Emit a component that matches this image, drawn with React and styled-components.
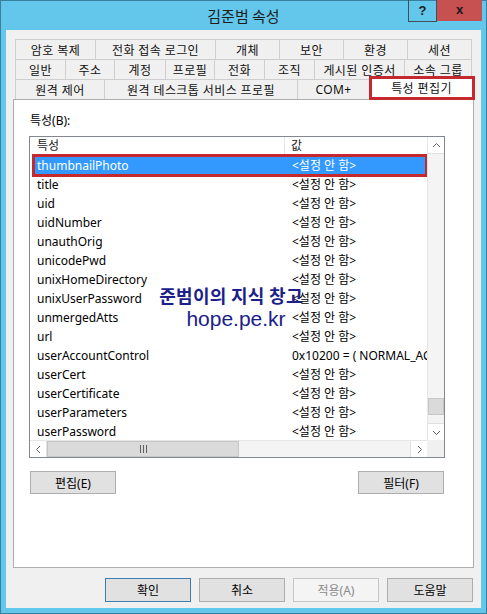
import React from 'react';
import styled, { createGlobalStyle, css } from 'styled-components';

const GlobalStyle = createGlobalStyle`
  html, body { margin: 0; padding: 0; background: #fff; }
  body {
    font-family: "Noto Sans", "Noto Sans CJK KR", sans-serif;
    font-size: 12px;
    color: #000;
  }
  * { box-sizing: border-box; }
`;

const tabRows = [
  [['암호 복제', 81], ['전화 접속 로그인', 120], ['개체', 64], ['보안', 64], ['환경', 64], ['세션', 64]],
  [['일반', 51], ['주소', 49], ['계정', 51], ['프로필', 49], ['전화', 50], ['조직', 50], ['게시된 인증서', 90], ['소속 그룹', 67]],
  [['원격 제어', 90], ['원격 데스크톱 서비스 프로필', 193], ['COM+', 72], ['특성 편집기', 102, true]],
];

const NOT_SET = '<설정 안 함>';

const attributes = [
  ['thumbnailPhoto', NOT_SET, true],
  ['title', NOT_SET],
  ['uid', NOT_SET],
  ['uidNumber', NOT_SET],
  ['unauthOrig', NOT_SET],
  ['unicodePwd', NOT_SET],
  ['unixHomeDirectory', NOT_SET],
  ['unixUserPassword', NOT_SET],
  ['unmergedAtts', NOT_SET],
  ['url', NOT_SET],
  ['userAccountControl', '0x10200 = ( NORMAL_ACCOUNT | DONT_EXPIRE_PASSWORD )'],
  ['userCert', NOT_SET],
  ['userCertificate', NOT_SET],
  ['userParameters', NOT_SET],
  ['userPassword', NOT_SET],
  ['userPrincipalName', 'hope@hope.pe.kr'],
];

const Window = styled.div`
  position: relative;
  width: 487px;
  height: 614px;
  background: #63c6eb;
  border: 1px solid #3b7f9e;
  padding: 0 5px 5px;
  display: flex;
  flex-direction: column;
`;

const TitleBar = styled.div`
  height: 29px;
  flex: none;
  display: grid;
  grid-template-columns: 1fr auto 1fr;
  align-items: center;
`;

const Title = styled.div`
  grid-column: 2;
  font-family: "Noto Sans CJK KR", sans-serif;
  font-size: 15px;
  color: #1e1e1e;
  margin-top: -1px;
`;

const Controls = styled.div`
  grid-column: 3;
  justify-self: end;
  align-self: start;
  display: flex;
  margin: -1px -1px 0 0;
`;

const HelpButton = styled.div`
  width: 29px;
  height: 22px;
  border: 1px solid #3d4f5a;
  border-top: 0;
  display: flex;
  align-items: center;
  justify-content: center;
  font-family: "Liberation Sans", sans-serif;
  font-weight: 700;
  font-size: 13px;
  color: #1a1a1a;
`;

const CloseButton = styled.div`
  width: 45px;
  height: 21px;
  background: #c75050;
  display: flex;
  align-items: center;
  justify-content: center;
  font-family: "Liberation Sans", sans-serif;
  font-weight: 700;
  font-size: 13px;
  color: #1a1a1a;
  padding-bottom: 2px;
`;

const Client = styled.div`
  flex: 1;
  background: #f0f0f0;
  padding: 9px 7px 0;
  display: flex;
  flex-direction: column;
`;

const TabStrip = styled.div`
  margin: 0 2px;
  display: flex;
  flex-direction: column;
`;

const TabRow = styled.div`
  display: flex;
  height: 20px;
`;

const Tab = styled.div`
  flex: none;
  width: ${p => p.$w}px;
  height: 20px;
  border: 1px solid #cfcfcf;
  border-bottom: 0;
  background: #f0f0f0;
  display: flex;
  align-items: center;
  justify-content: center;
  white-space: nowrap;
  letter-spacing: 0.4px;
  color: #111;
  & + & { border-left: 0; }
  ${p => p.$active && css`
    width: ${p.$w + 4}px;
    height: 24px;
    margin: -3px -3px 0 -1px;
    background: #fff;
    position: relative;
    z-index: 1;
    outline: 3px solid #c5282e;
    outline-offset: -3px;
    padding-bottom: 2px;
  `}
`;

const Panel = styled.div`
  height: 469px;
  flex: none;
  background: #fff;
  border: 1px solid #adadad;
  padding: 13px 15px 0;
  display: flex;
  flex-direction: column;
`;

const Label = styled.div`
  height: 16px;
  line-height: 16px;
  margin: 0 0 7px 1px;
`;

const ListBox = styled.div`
  width: 416px;
  height: 322px;
  flex: none;
  border: 1px solid #828790;
  display: grid;
  grid-template-columns: minmax(0, 1fr) 17px;
  grid-template-rows: minmax(0, 1fr) 17px;
  overflow: hidden;
`;

const Content = styled.div`
  overflow: hidden;
`;

const Columns = styled.div`
  display: grid;
  grid-template-columns: 255px minmax(0, 1fr);
  height: 19px;
  line-height: 19px;
  white-space: nowrap;
`;

const HeaderCell = styled.div`
  padding-left: ${p => (p.$first ? 7 : 6)}px;
  line-height: 18px;
  color: #1a1a1a;
  border-right: ${p => (p.$first ? '1px solid #e5e5e5' : '0')};
  overflow: hidden;
`;

const Row = styled(Columns)`
  ${p => p.$selected && css`
    grid-template-columns: 251px minmax(0, 1fr);
    background: #3399ff;
    color: #fff;
    outline: 3px solid #c5282e;
    outline-offset: -1px;
    position: relative;
    margin: 0 1px 0 4px;
  `}
`;

const Cell = styled.div`
  padding-left: ${p => p.$pad}px;
  overflow: hidden;
`;

const VScroll = styled.div`
  background: #f4f4f4;
  border-left: 1px solid #e6e6e6;
  display: flex;
  flex-direction: column;
`;

const HScroll = styled.div`
  background: #f4f4f4;
  border-top: 1px solid #e6e6e6;
  display: flex;
`;

const Corner = styled.div`
  background: #f0f0f0;
`;

const Arrow = styled.div`
  flex: none;
  width: ${p => (p.$h ? 17 : 16)}px;
  height: ${p => (p.$h ? 16 : 17)}px;
  display: flex;
  align-items: center;
  justify-content: center;
  background: #fff;
  border: 0 solid #e0e0e0;
  ${p => p.$side && css`border-${p.$side}-width: 1px;`}
`;

const Track = styled.div`
  flex: 1;
  display: flex;
  flex-direction: column;
  justify-content: flex-end;
  padding-bottom: 8px;
`;

const Thumb = styled.div`
  flex: none;
  background: #dadada;
  border: 1px solid #c6c6c6;
  width: ${p => (p.$h ? '192px' : '100%')};
  height: ${p => (p.$h ? '100%' : '17px')};
  display: flex;
  align-items: center;
  justify-content: center;
  margin-right: ${p => (p.$h ? 'auto' : 0)};
`;

const ButtonRow = styled.div`
  display: flex;
  justify-content: space-between;
  width: 416px;
  padding: 0 1px;
  margin-top: 13px;
`;

const Button = styled.button`
  width: 86px;
  height: ${p => p.$h || 23}px;
  padding: 0;
  border: 1px solid #adadad;
  background: #e1e1e1;
  font: inherit;
  color: #000;
  ${p => p.$default && css`border-color: #3c7fb1;`}
  &:disabled {
    background: #f4f4f4;
    border-color: #c6c6c6;
    color: #8a8a8a;
  }
`;

const Footer = styled.div`
  display: flex;
  justify-content: flex-end;
  gap: 8px;
  margin-top: 10px;
  padding-right: 1px;
`;

const Watermark = styled.div`
  position: absolute;
  left: 150px;
  top: 283px;
  width: 160px;
  text-align: center;
  color: #1b2188;
  pointer-events: none;
`;

const MarkTitle = styled.div`
  font-family: "Noto Sans CJK KR", sans-serif;
  font-weight: 700;
  font-size: 18px;
  line-height: 23px;
  letter-spacing: 0.3px;
`;

const MarkUrl = styled.div`
  font-family: "Liberation Sans", sans-serif;
  font-size: 21px;
  line-height: 24px;
  margin-left: 10px;
`;

const Chevron = ({ dir }) => {
  const pts = {
    up: '1,6 4.5,2.5 8,6',
    down: '1,3 4.5,6.5 8,3',
    left: '6,1 2.5,4.5 6,8',
    right: '3,1 6.5,4.5 3,8',
  }[dir];
  return (
    <svg width="9" height="9" viewBox="0 0 9 9">
      <polyline points={pts} fill="none" stroke="#606060" strokeWidth="1" />
    </svg>
  );
};

const GripLines = () => (
  <svg width="7" height="8" viewBox="0 0 7 8">
    <path d="M0.5 0v8M3.5 0v8M6.5 0v8" stroke="#606060" strokeWidth="1" />
  </svg>
);

export default function App() {
  return (
    <>
      <GlobalStyle />
      <Window>
        <TitleBar>
          <Title>김준범 속성</Title>
          <Controls>
            <HelpButton>?</HelpButton>
            <CloseButton>x</CloseButton>
          </Controls>
        </TitleBar>
        <Client>
          <TabStrip>
            {tabRows.map((row, i) => (
              <TabRow key={i}>
                {row.map(([name, w, active]) => (
                  <Tab key={name} $w={w} $active={active}>{name}</Tab>
                ))}
              </TabRow>
            ))}
          </TabStrip>
          <Panel>
            <Label>특성(B):</Label>
            <ListBox>
              <Content>
                <Columns>
                  <HeaderCell $first>특성</HeaderCell>
                  <HeaderCell>값</HeaderCell>
                </Columns>
                {attributes.map(([name, value, selected]) => (
                  <Row key={name} $selected={selected}>
                    <Cell $pad={selected ? 3 : 7}>{name}</Cell>
                    <Cell $pad={7}>{value}</Cell>
                  </Row>
                ))}
              </Content>
              <VScroll>
                <Arrow $side="bottom"><Chevron dir="up" /></Arrow>
                <Track>
                  <Thumb />
                </Track>
                <Arrow $side="top"><Chevron dir="down" /></Arrow>
              </VScroll>
              <HScroll>
                <Arrow $h $side="right"><Chevron dir="left" /></Arrow>
                <Thumb $h><GripLines /></Thumb>
                <Arrow $h $side="left"><Chevron dir="right" /></Arrow>
              </HScroll>
              <Corner />
            </ListBox>
            <ButtonRow>
              <Button>편집(E)</Button>
              <Button>필터(F)</Button>
            </ButtonRow>
          </Panel>
          <Footer>
            <Button $h={24} $default>확인</Button>
            <Button $h={24}>취소</Button>
            <Button $h={24} disabled>적용(A)</Button>
            <Button $h={24}>도움말</Button>
          </Footer>
        </Client>
        <Watermark>
          <MarkTitle>준범이의 지식 창고</MarkTitle>
          <MarkUrl>hope.pe.kr</MarkUrl>
        </Watermark>
      </Window>
    </>
  );
}
